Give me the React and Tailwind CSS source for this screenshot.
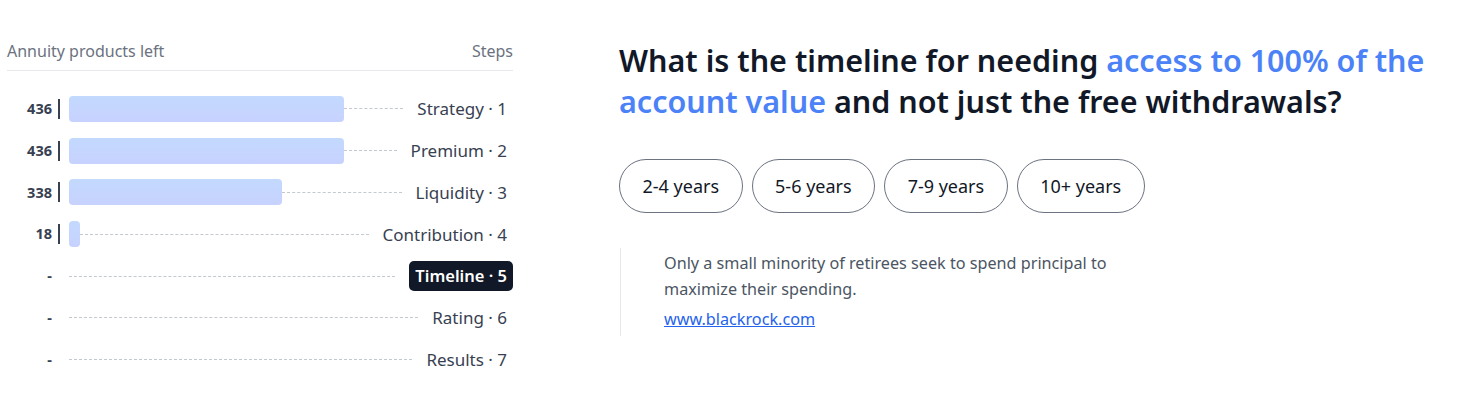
import React from "react";

const steps = [
  { label: "Strategy", n: 1, count: 436 },
  { label: "Premium", n: 2, count: 436 },
  { label: "Liquidity", n: 3, count: 338 },
  { label: "Contribution", n: 4, count: 18 },
  { label: "Timeline", n: 5, count: null, active: true },
  { label: "Rating", n: 6, count: null },
  { label: "Results", n: 7, count: null },
];

const options = ["2-4 years", "5-6 years", "7-9 years", "10+ years"];
const TOTAL = 436;
const FULL = 275;

function StepRow({ step }) {
  const width = step.count ? Math.max(11, Math.round((step.count / TOTAL) * FULL)) : 0;
  return (
    <div className="flex items-center h-[41.8px]">
      <div className="w-[52px] text-right text-[14.5px] font-bold text-[#374151]">
        {step.count ?? "-"}
      </div>
      <div className="w-[17px] flex justify-start pl-[6px]">
        {step.count ? <div className="w-[2px] h-[20px] bg-[#374151]" /> : null}
      </div>
      {step.count ? (
        <div
          className="h-[26px] rounded-[4px] bg-gradient-to-b from-[#c3d9fe] to-[#c7d2fe] shrink-0"
          style={{ width }}
        />
      ) : null}
      <div className="flex-1 border-t border-dashed border-[#c4c8cf] mr-[14px]" />
      {step.active ? (
        <span className="bg-[#111827] text-white font-semibold text-[16.5px] rounded-[5px] px-[6px] h-[30px] flex items-center">
          {step.label} · {step.n}
        </span>
      ) : (
        <span className="text-[17px] text-[#374151] pr-[6px]">
          {step.label} · {step.n}
        </span>
      )}
    </div>
  );
}

export default function App() {
  return (
    <div className="w-[1477px] h-[405px] bg-white flex font-['Noto_Sans',sans-serif]">
      <div className="w-[506px] ml-[7px] pt-[39px]">
        <div className="flex justify-between text-[16px] text-[#6b7280] pb-[7px] border-b border-[#e5e7eb]">
          <span>Annuity products left</span>
          <span>Steps</span>
        </div>
        <div className="pt-[17px] -ml-[7px]">
          {steps.map((s) => (
            <StepRow key={s.n} step={s} />
          ))}
        </div>
      </div>
      <div className="ml-[106px] pt-[40px]">
        <h1 className="text-[30.5px] leading-[41px] font-semibold text-[#111827] w-[830px]">
          What is the timeline for needing{" "}
          <span className="text-[#4b82f7]">access to 100% of the account value</span>{" "}
          and not just the free withdrawals?
        </h1>
        <div className="flex gap-[9px] mt-[37px]">
          {options.map((o) => (
            <button
              key={o}
              className="h-[54px] px-[22.5px] rounded-full border border-[#6b7280] text-[18px] text-[#111827]"
            >
              {o}
            </button>
          ))}
        </div>
        <div className="mt-[35px] ml-[1px] border-l border-[#e5e7eb] pl-[43px] py-[2px]">
          <p className="text-[16.2px] leading-[26px] text-[#4b5563] w-[470px]">
            Only a small minority of retirees seek to spend principal to maximize their spending.
          </p>
          <a href="#" className="block text-[16.2px] leading-[30px] pt-[2px] text-[#2563eb] underline">
            www.blackrock.com
          </a>
        </div>
      </div>
    </div>
  );
}
